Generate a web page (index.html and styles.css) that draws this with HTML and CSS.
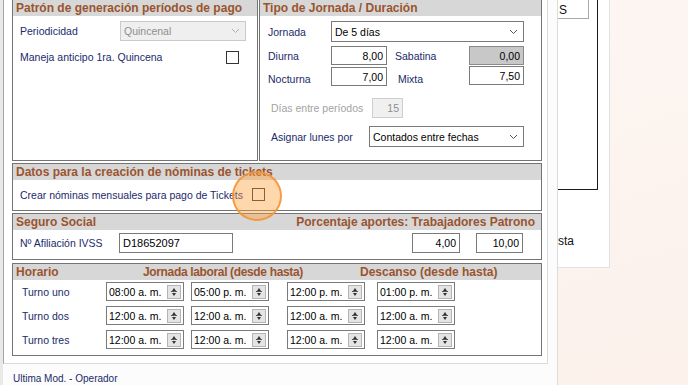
FILE: index.html
```html
<!DOCTYPE html>
<html lang="es">
<head>
    <meta charset="UTF-8">
    <meta name="viewport" content="width=device-width, initial-scale=1.0">
    <title>Parámetros de nómina</title>
    <link rel="stylesheet" href="styles.css">
</head>
<body>
    <div class="desk">
        <div class="form">
            <div class="panel">
                <div class="row-top">
                    <div class="group g-pago">
                        <div class="ghead"><span>Patrón de generación períodos de pago</span></div>
                        <div class="gbody">
                            <div class="line l-periodo">
                                <span class="lbl">Periodicidad</span>
                                <div class="combo off">Quincenal
                                    <svg width="9" height="6" viewBox="0 0 9 6"><polyline points="1,1 4.5,4.5 8,1" fill="none" stroke="#b0b0b0" stroke-width="1"/></svg>
                                </div>
                            </div>
                            <div class="line l-anticipo">
                                <span class="lbl">Maneja anticipo 1ra. Quincena</span>
                                <span class="check"></span>
                            </div>
                        </div>
                    </div>
                    <div class="group g-jornada">
                        <div class="ghead"><span>Tipo de Jornada / Duración</span></div>
                        <div class="gbody">
                            <div class="line l-tipo">
                                <span class="lbl">Jornada</span>
                                <div class="combo">De 5 días
                                    <svg width="9" height="6" viewBox="0 0 9 6"><polyline points="1,1 4.5,4.5 8,1" fill="none" stroke="#555" stroke-width="1"/></svg>
                                </div>
                            </div>
                            <div class="line l-diurna">
                                <span class="lbl">Diurna</span>
                                <div class="num w56">8,00</div>
                                <span class="lbl lbl-sab">Sabatina</span>
                                <div class="num w55 grey">0,00</div>
                            </div>
                            <div class="line l-nocturna">
                                <span class="lbl low">Nocturna</span>
                                <div class="num w56">7,00</div>
                                <span class="lbl lbl-mix low">Mixta</span>
                                <div class="num w55 up">7,50</div>
                            </div>
                            <div class="line l-dias">
                                <span class="lbl">Días entre períodos</span>
                                <div class="num off">15</div>
                            </div>
                            <div class="line l-lunes">
                                <span class="lbl">Asignar lunes por</span>
                                <div class="combo">Contados entre fechas
                                    <svg width="9" height="6" viewBox="0 0 9 6"><polyline points="1,1 4.5,4.5 8,1" fill="none" stroke="#555" stroke-width="1"/></svg>
                                </div>
                            </div>
                        </div>
                    </div>
                </div>

                <div class="group g-tickets">
                    <div class="ghead"><span>Datos para la creación de nóminas de tickets</span></div>
                    <div class="gbody">
                        <div class="line l-crear">
                            <span class="lbl">Crear nóminas mensuales para pago de Tickets</span>
                            <span class="check"></span>
                        </div>
                    </div>
                </div>

                <div class="group g-seguro">
                    <div class="ghead split"><span>Seguro Social</span><span>Porcentaje aportes: Trabajadores Patrono</span></div>
                    <div class="gbody">
                        <div class="line l-ivss">
                            <span class="lbl">Nº Afiliación IVSS</span>
                            <div class="text-in">D18652097</div>
                            <div class="num w48 push">4,00</div>
                            <div class="num w47">10,00</div>
                        </div>
                    </div>
                </div>

                <div class="group g-horario">
                    <div class="ghead cols"><span class="c1">Horario</span><span class="c2">Jornada laboral (desde hasta)</span><span>Descanso (desde hasta)</span></div>
                    <div class="gbody">
                        <div class="line turno">
                            <span class="lbl">Turno uno</span>
                            <div class="picker p1">08:00 a. m.<span class="spin"></span></div>
                            <div class="picker p2">05:00 p. m.<span class="spin"></span></div>
                            <div class="picker p3">12:00 p. m.<span class="spin"></span></div>
                            <div class="picker p4">01:00 p. m.<span class="spin"></span></div>
                        </div>
                        <div class="line turno">
                            <span class="lbl">Turno dos</span>
                            <div class="picker p1">12:00 a. m.<span class="spin"></span></div>
                            <div class="picker p2">12:00 a. m.<span class="spin"></span></div>
                            <div class="picker p3">12:00 a. m.<span class="spin"></span></div>
                            <div class="picker p4">12:00 a. m.<span class="spin"></span></div>
                        </div>
                        <div class="line turno">
                            <span class="lbl">Turno tres</span>
                            <div class="picker p1">12:00 a. m.<span class="spin"></span></div>
                            <div class="picker p2">12:00 a. m.<span class="spin"></span></div>
                            <div class="picker p3">12:00 a. m.<span class="spin"></span></div>
                            <div class="picker p4">12:00 a. m.<span class="spin"></span></div>
                        </div>
                    </div>
                </div>
            </div>
            <div class="status">Ultima Mod. - Operador</div>
        </div>

        <div class="behind">
            <div class="b-frame">
                <div class="b-field">S</div>
            </div>
            <div class="b-text">sta</div>
        </div>

        <!-- click highlight over the tickets checkbox -->
        <div class="spot"></div>
    </div>
</body>
</html>
```

FILE: styles.css
```css
* {
    box-sizing: border-box;
}
body {
    margin: 0;
    width: 688px;
    height: 385px;
    overflow: hidden;
    font-family: "Liberation Sans", Arial, sans-serif;
    font-size: 10.5px;
    color: #1b2a6b;
}
.desk {
    position: relative;
    display: flex;
    height: 385px;
    background: linear-gradient(160deg, #fdf8f5 0%, #fcf1eb 100%);
}

/* main window */
.form {
    width: 558px;
    flex: none;
    display: flex;
    flex-direction: column;
    background: #fcfcfc;
    border-left: 3px solid #e9e9e9;
    border-right: 1px solid #dcdcdc;
}
.panel {
    margin: -1px 9px 0 0;
    padding: 0 5px 7px 8px;
    display: flex;
    flex-direction: column;
    background: #fff;
    border: 1px solid #dadada;
    border-top: none;
    border-left-color: #a5a5a5;
}
.status {
    margin-top: 9px;
    padding-left: 10px;
    font-size: 10px;
    line-height: 12px;
}

/* group boxes */
.row-top {
    display: flex;
    height: 162px;
}
.group {
    display: flex;
    flex-direction: column;
    background: #fff;
    border: 1px solid #747474;
}
.ghead {
    height: 16px;
    padding-left: 3px;
    display: flex;
    background: #d7d7d7;
    color: #9a542f;
    font-weight: bold;
    font-size: 12px;
    line-height: 16px;
    white-space: nowrap;
}
.ghead.split {
    justify-content: space-between;
    padding-right: 6px;
}
.ghead.cols .c1 {
    width: 127px;
}
.ghead.cols .c2 {
    width: 217px;
    letter-spacing: -0.35px;
}
.g-pago {
    width: 246px;
}
.g-jornada {
    width: 283px;
    margin-left: 1px;
}
.g-tickets {
    height: 48px;
    margin-top: 2px;
}
.g-seguro {
    height: 47px;
    margin-top: 2px;
}
.g-horario {
    height: 93px;
    margin-top: 3px;
}
.g-pago .gbody,
.g-tickets .gbody,
.g-seguro .gbody {
    padding-left: 7px;
}
.g-jornada .gbody {
    padding-left: 8px;
}

.line {
    display: flex;
    align-items: center;
}
.lbl {
    flex: none;
    white-space: nowrap;
}
.lbl.low {
    align-self: flex-end;
    margin-bottom: 1px;
}

/* first group */
.l-periodo {
    margin-top: 5px;
    height: 20px;
}
.l-periodo .lbl {
    width: 100px;
}
.l-periodo .combo {
    width: 126px;
}
.l-anticipo {
    margin-top: 9px;
    height: 14px;
}
.l-anticipo .lbl {
    width: 206px;
}

/* jornada group */
.l-tipo {
    margin-top: 5px;
    height: 21px;
}
.l-tipo .lbl,
.l-diurna > .lbl:first-child,
.l-nocturna > .lbl:first-child {
    width: 63px;
}
.l-tipo .combo {
    width: 193px;
}
.l-diurna {
    margin-top: 4px;
    height: 19px;
}
.l-nocturna {
    margin-top: 2px;
    height: 19px;
}
.lbl-sab {
    margin-left: 8px;
    width: 74px;
}
.lbl-mix {
    margin-left: 11px;
    width: 71px;
}
.l-dias {
    margin-top: 12px;
    height: 20px;
}
.l-dias .lbl {
    width: 104px;
    padding-left: 3px;
    color: #a3a3a3;
}
.l-dias .num {
    width: 31px;
}
.l-lunes {
    margin-top: 8px;
    height: 21px;
}
.l-lunes .lbl {
    width: 101px;
    padding-left: 3px;
}
.l-lunes .combo {
    width: 155px;
}

/* inputs */
.combo {
    height: 100%;
    display: flex;
    align-items: center;
    justify-content: space-between;
    padding: 0 5px 0 3px;
    background: #fff;
    border: 1px solid #7a7a7a;
    color: #000;
}
.combo.off {
    background: #efefef;
    border-color: #cacaca;
    color: #8e8e8e;
}
.num {
    height: 100%;
    display: flex;
    align-items: center;
    justify-content: flex-end;
    padding-right: 3px;
    background: #fff;
    border: 1px solid #7a7a7a;
    color: #000;
}
.num.grey {
    background: #c8c8c8;
    border-color: #8a8a8a;
}
.num.off {
    background: #f0f0f0;
    border-color: #cfcfcf;
    color: #8e8e8e;
}
.num.up {
    margin-top: -2px;
}
.w56 { width: 56px; }
.w55 { width: 55px; }
.w48 { width: 48px; }
.w47 { width: 47px; margin-left: 16px; }
.push { margin-left: auto; }

.check {
    width: 13px;
    height: 13px;
    background: #fff;
    border: 1px solid #333;
}

/* tickets */
.l-crear {
    margin-top: 8px;
    height: 13px;
}
.l-crear .lbl {
    width: 232px;
}

/* seguro social */
.l-ivss {
    margin-top: 3px;
    height: 20px;
    padding-right: 18px;
}
.l-ivss .lbl {
    width: 99px;
}
.text-in {
    width: 114px;
    height: 100%;
    display: flex;
    align-items: center;
    padding-left: 3px;
    border: 1px solid #7a7a7a;
    color: #000;
    font-size: 11px;
}

/* horario */
.turno {
    height: 19px;
    margin-top: 5px;
}
.turno:first-child {
    margin-top: 2px;
}
.turno .lbl {
    width: 93px;
    padding-left: 9px;
}
.picker {
    width: 78px;
    height: 100%;
    display: flex;
    align-items: center;
    padding-left: 2px;
    border: 1px solid #7a7a7a;
    color: #000;
    white-space: nowrap;
}
.p2 { margin-left: 7px; }
.p3 { margin-left: 18px; }
.p4 { margin-left: 12px; }
.spin {
    width: 14px;
    height: 14px;
    margin-left: auto;
    margin-right: 2px;
    border: 1px solid #b4b4b4;
    background:
        linear-gradient(#555, #555) center / 6px 1px no-repeat,
        #e4e4e4;
    position: relative;
}
.spin::before,
.spin::after {
    content: "";
    position: absolute;
    left: 4px;
    border-left: 2.5px solid transparent;
    border-right: 2.5px solid transparent;
}
.spin::before {
    top: 2px;
    border-bottom: 3px solid #333;
}
.spin::after {
    bottom: 2px;
    border-top: 3px solid #333;
}

/* window behind the form */
.behind {
    width: 52px;
    height: 268px;
    flex: none;
    background: #fff;
    border-right: 1px solid #e2e2e2;
    border-bottom: 1px solid #e2e2e2;
}
.b-frame {
    width: 40px;
    height: 191px;
    border-right: 1px solid #1a1a1a;
    border-bottom: 1px solid #1a1a1a;
}
.b-field {
    width: 31px;
    height: 20px;
    margin-top: -1px;
    padding: 3px 0 0 1px;
    border: 1px solid #a9a9a9;
    border-left: none;
    color: #111;
    font-size: 12px;
}
.b-text {
    margin-top: 44px;
    font-size: 12px;
    color: #111;
}

.spot {
    position: absolute;
    left: 232px;
    top: 171px;
    width: 50px;
    height: 50px;
    border-radius: 50%;
    background: rgba(255, 160, 60, 0.42);
    border: 2px solid rgba(246, 146, 50, 0.85);
}
```
